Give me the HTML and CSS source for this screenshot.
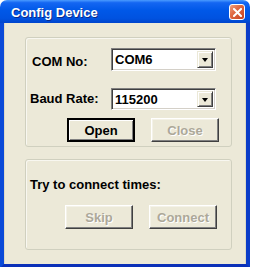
FILE: index.html
```html
<!DOCTYPE html>
<html>
<head>
<meta charset="utf-8">
<link rel="stylesheet" href="styles.css">
</head>
<body>
<div class="window">
  <div class="titlebar">
    <span class="title">Config Device</span>
    <span class="close">
      <svg width="9" height="9" viewBox="0 0 9 9"><path d="M1 1 L8 8 M8 1 L1 8" stroke="#fff" stroke-width="2" stroke-linecap="square"/></svg>
    </span>
  </div>
  <div class="frame">
    <div class="group g1">
      <div class="row r1">
        <span class="label l1">COM No:</span>
        <div class="combo"><span class="val">COM6</span><span class="drop"><i class="arrow"></i></span></div>
      </div>
      <div class="row r2">
        <span class="label l2">Baud Rate:</span>
        <div class="combo"><span class="val">115200</span><span class="drop"><i class="arrow"></i></span></div>
      </div>
      <div class="buttons b1">
        <button class="btn default">Open</button>
        <button class="btn disabled">Close</button>
      </div>
    </div>
    <div class="group g2">
      <div class="try">Try to connect times:</div>
      <div class="buttons b2">
        <button class="btn disabled">Skip</button>
        <button class="btn disabled">Connect</button>
      </div>
    </div>
  </div>
</div>
</body>
</html>
```
FILE: styles.css
```css
html, body {
  margin: 0;
  padding: 0;
  background: #ffffff;
}
body {
  font-family: "Liberation Sans", Arial, sans-serif;
  font-size: 13px;
  font-weight: bold;
}
.window {
  width: 250px;
  height: 267px;
  display: flex;
  flex-direction: column;
}
.titlebar {
  height: 23px;
  flex: none;
  border-radius: 7px 7px 0 0;
  background: linear-gradient(to bottom, #4a9bff 0%, #1466f2 12%, #0058e8 45%, #0052e0 80%, #0045cc 100%);
  display: flex;
  align-items: center;
  justify-content: space-between;
  padding: 0 5px 0 11px;
  box-sizing: border-box;
}
.title {
  color: #fff;
  font-size: 13px;
  font-weight: bold;
  text-shadow: 1px 1px 0 #0a2a8a;
  padding-top: 1px;
}
.close {
  width: 14px;
  height: 14px;
  border: 1px solid #fff;
  border-radius: 3px;
  background: linear-gradient(135deg, #f0a080 0%, #e06a44 40%, #c4401f 100%);
  display: flex;
  align-items: center;
  justify-content: center;
  margin-top: 1px;
}
.frame {
  flex: 1;
  background: #ece9d8;
  border: 4px solid #0a4fe0;
  border-top: 0;
  border-left-color: #0a4ad8;
  border-right-color: #0a3cc8;
  border-bottom-color: #0a30b8;
  box-shadow: inset 1px 0 #dcd9c6, inset -1px 0 #dcd9c6;
  padding: 14px 14px 14px 21px;
  display: flex;
  flex-direction: column;
  gap: 12px;
}
.group {
  width: 207px;
  box-sizing: border-box;
  border: 1px solid #d0d0bf;
  border-radius: 3px;
  box-shadow: inset 1px 1px 0 #f8f7f0;
}
.g1 {
  height: 110px;
  padding-top: 10px;
}
.g2 {
  height: 91px;
  padding-top: 17px;
}
.row {
  display: flex;
  align-items: center;
  height: 23px;
}
.r2 {
  margin-top: 17px;
  height: 22px;
}
.label {
  color: #000;
  width: 85px;
  box-sizing: border-box;
}
.l1 { padding-left: 6px; margin-top: 4px; }
.l2 { padding-left: 4px; margin-top: -1px; }
.try { padding-left: 4px; }
.combo {
  width: 105px;
  height: 100%;
  box-sizing: border-box;
  background: #fff;
  border: 1px solid;
  border-color: #808080 #ffffff #ffffff #808080;
  box-shadow: inset 1px 1px 0 #404040, inset -1px -1px 0 #d4d0c8;
  display: flex;
  padding: 2px 2px 2px 3px;
}
.val {
  flex: 1;
  color: #000;
  line-height: 15px;
  padding-top: 1px;
}
.drop {
  width: 16px;
  box-sizing: border-box;
  background: #ece9d8;
  border: 1px solid;
  border-color: #ece9d8 #404040 #404040 #ece9d8;
  box-shadow: inset 1px 1px 0 #fff, inset -1px -1px 0 #808080;
  display: flex;
  align-items: center;
  justify-content: center;
}
.arrow {
  width: 0;
  height: 0;
  border-left: 3px solid transparent;
  border-right: 3px solid transparent;
  border-top: 4px solid #000;
  margin-top: 1px;
}
.buttons {
  display: flex;
  gap: 16px;
}
.b1 {
  margin-top: 8px;
  padding-left: 41px;
}
.b2 {
  margin-top: 13px;
  padding-left: 39px;
}
.btn {
  width: 68px;
  height: 24px;
  box-sizing: border-box;
  font-family: "Liberation Sans", Arial, sans-serif;
  font-size: 13px;
  font-weight: bold;
  background: #ece9d8;
  border: 1px solid;
  border-color: #fff #404040 #404040 #fff;
  box-shadow: inset -1px -1px 0 #808080, inset 1px 1px 0 #f4f2e8;
  padding: 0;
  margin: 0;
  color: #000;
}
.btn.default {
  border: 2px solid #000;
  box-shadow: inset 1px 1px 0 #fff, inset -1px -1px 0 #808080;
}
.btn.disabled {
  color: #aca899;
  text-shadow: 1px 1px 0 #fff;
}
```
